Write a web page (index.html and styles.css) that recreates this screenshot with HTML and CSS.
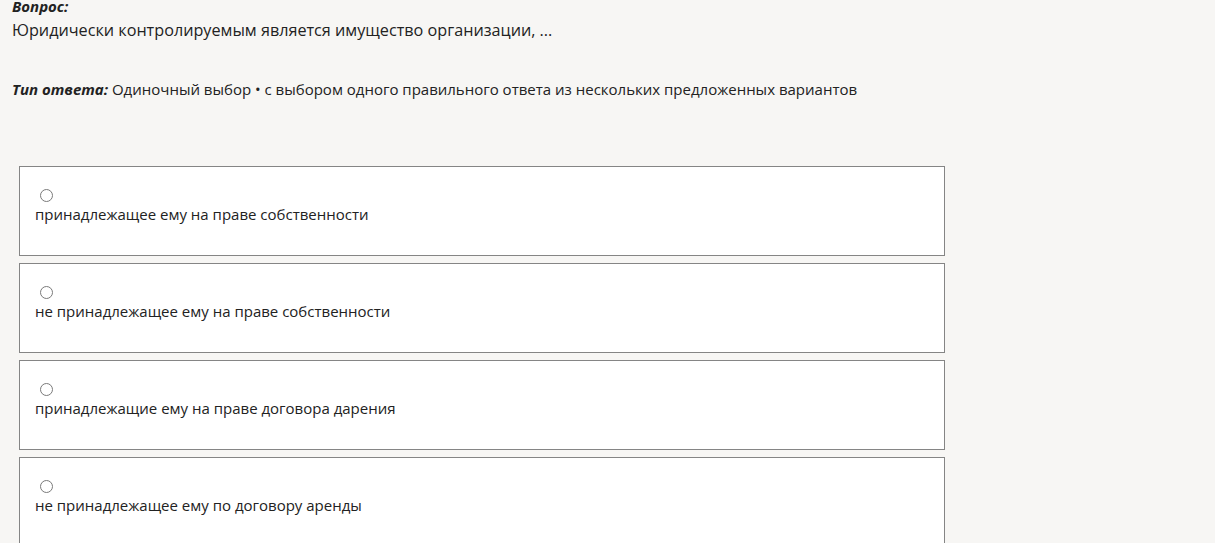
FILE: index.html
```html
<!DOCTYPE html>
<html lang="ru">
<head>
<meta charset="utf-8">
<link rel="stylesheet" href="styles.css">
</head>
<body>
<main class="page">
  <section class="question">
    <div class="label">Вопрос:</div>
    <div class="question-text">Юридически контролируемым является имущество организации, ...</div>
    <div class="answer-type"><span class="label-inline">Тип ответа:</span> Одиночный выбор • с выбором одного правильного ответа из нескольких предложенных вариантов</div>
  </section>
  <section class="options">
    <label class="option"><input type="radio" name="a" class="radio"><span class="option-text">принадлежащее ему на праве собственности</span></label>
    <label class="option"><input type="radio" name="a" class="radio"><span class="option-text">не принадлежащее ему на праве собственности</span></label>
    <label class="option"><input type="radio" name="a" class="radio"><span class="option-text">принадлежащие ему на праве договора дарения</span></label>
    <label class="option"><input type="radio" name="a" class="radio"><span class="option-text">не принадлежащее ему по договору аренды</span></label>
  </section>
</main>
</body>
</html>
```
FILE: styles.css
```css
html, body {
  margin: 0;
  padding: 0;
  background: #f7f6f4;
  font-family: "Open Sans", "Noto Sans", sans-serif;
  color: #222;
  overflow: hidden;
}
.page {
  padding: 0 0 0 12px;
  margin-top: -4px;
}
.question {
  display: flex;
  flex-direction: column;
}
.label {
  font-weight: 700;
  font-style: italic;
  font-size: 15px;
  line-height: 20px;
}
.question-text {
  font-size: 16.2px;
  line-height: 22px;
  margin-top: 3px;
}
.answer-type {
  font-size: 15px;
  line-height: 20px;
  margin-top: 38px;
}
.label-inline {
  font-weight: 700;
  font-style: italic;
}
.options {
  display: flex;
  flex-direction: column;
  gap: 7px;
  margin: 67px 0 0 7px;
  width: 926px;
}
.option {
  display: flex;
  flex-direction: column;
  align-items: flex-start;
  box-sizing: border-box;
  height: 90px;
  background: #fff;
  border: 1px solid #858585;
  padding: 22px 15px 0;
}
.radio {
  appearance: none;
  -webkit-appearance: none;
  width: 13px;
  height: 13px;
  margin: 0 0 0 5px;
  border: 1px solid #7a7a7a;
  border-radius: 50%;
  background: #fff;
}
.option-text {
  font-size: 15px;
  line-height: 20px;
  margin-top: 2px;
}
```
